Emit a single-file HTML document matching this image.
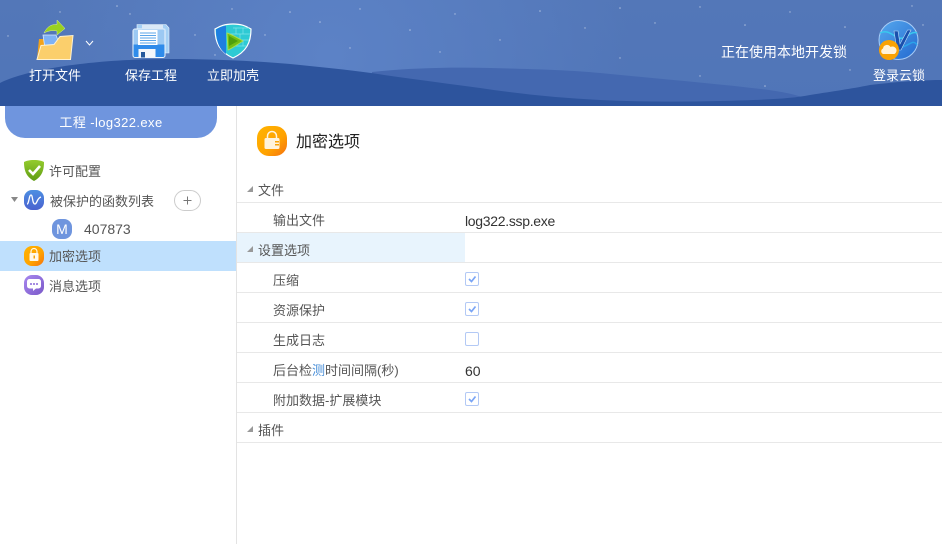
<!DOCTYPE html>
<html lang="zh"><head><meta charset="utf-8"><style>
html,body{margin:0;padding:0;background:#fff}
#p{position:relative;width:942px;height:544px;overflow:hidden;font-family:"Liberation Sans","Noto Sans CJK SC",sans-serif;font-size:13px;color:#555}
.t{position:absolute;white-space:nowrap;line-height:18px}
.w{color:#fff}
.l{position:absolute;left:237px;right:0;height:1px;background:#e8e8e8}
.c{position:absolute;left:465px;width:12px;height:12px;border:1px solid #b3c9f5;border-radius:2px;background:#fff}
.a{position:absolute;left:247px;width:0;height:0;border-left:6px solid transparent;border-bottom:6px solid #999}
svg{position:absolute;overflow:visible}
</style></head><body><div id="p">
<svg style="left:0;top:0" width="942" height="106" viewBox="0 0 942 106">
<defs><linearGradient id="bg" x1="0" y1="0" x2="0" y2="1"><stop offset="0" stop-color="#5377b8"/><stop offset="1" stop-color="#5075b8"/></linearGradient>
<radialGradient id="gl" gradientUnits="userSpaceOnUse" cx="330" cy="55" r="300"><stop offset="0" stop-color="#5c82c6" stop-opacity="1"/><stop offset="1" stop-color="#5c82c6" stop-opacity="0"/></radialGradient>
<linearGradient id="cb" x1="0" y1="0" x2="1" y2="1"><stop offset="0" stop-color="#56a8ee"/><stop offset="1" stop-color="#2369d0"/></linearGradient></defs>
<rect width="942" height="106" fill="url(#bg)"/><rect width="942" height="106" fill="url(#gl)"/>
<path d="M372 72C410 68 450 67 490 68C530 69 570 70 600 73C660 79 720 84 769 90C790 93 800 96 810 100V106H372Z" fill="#4468b0"/>
<path d="M0 83C30 68 100 59 168 59C215 59 260 61 300 65C330 68 360 71 384 75C420 80 450 84 480 88C520 94 560 98 600 100C640 102 680 102 720 101C760 100 790 99 810 95C835 91 850 89 870 85C895 82 920 80 942 80V106H0Z" fill="#2d549d"/>
<g fill="#fff" opacity=".5"><circle cx="117" cy="6" r=".8"/><circle cx="130" cy="14" r=".7"/><circle cx="232" cy="9" r=".7"/><circle cx="290" cy="12" r=".8"/><circle cx="195" cy="35" r=".7"/><circle cx="265" cy="35" r=".7"/><circle cx="8" cy="36" r=".7"/><circle cx="320" cy="22" r=".8"/><circle cx="360" cy="9" r=".7"/><circle cx="410" cy="30" r=".8"/><circle cx="455" cy="14" r=".7"/><circle cx="500" cy="40" r=".7"/><circle cx="540" cy="11" r=".8"/><circle cx="585" cy="28" r=".7"/><circle cx="620" cy="8" r=".8"/><circle cx="655" cy="23" r=".7"/><circle cx="700" cy="7" r=".7"/><circle cx="745" cy="25" r=".8"/><circle cx="790" cy="12" r=".7"/><circle cx="845" cy="27" r=".8"/><circle cx="912" cy="6" r=".7"/><circle cx="923" cy="25" r=".7"/><circle cx="700" cy="76" r=".7"/><circle cx="765" cy="86" r=".8"/><circle cx="850" cy="70" r=".7"/><circle cx="350" cy="48" r=".7"/><circle cx="620" cy="58" r=".7"/><circle cx="215" cy="55" r=".7"/><circle cx="60" cy="12" r=".7"/><circle cx="440" cy="52" r=".7"/></g>
<!-- folder -->
<path d="M37 59L39 39H46L50 36V59Z" fill="#f2a31b"/>
<path d="M43 35L56 35L60 46L46 55Z" fill="#7fb2f5" stroke="#dbe9fb" stroke-width=".8"/>
<path d="M37 59.500L41 45.500L54 44.500L60 36.500L73 35.500L70.500 59.500Z" fill="#fbcf6c" stroke="#fff2d0" stroke-width="1"/>
<path d="M44 33C47 27 51 24 57 24.500V20L65 28.500L57 35V31C52 30 48 31 44 33Z" fill="#9ad11f" stroke="#d8ee9c" stroke-width=".5"/>
<path d="M86 41L89.500 45L93 41" fill="none" stroke="#fff" stroke-width="1"/>
<!-- save -->
<path d="M137 24.500H166L169 28V53H165V29L137 29Z" fill="#a5d0f5" stroke="#e8f2fb" stroke-width=".6"/>
<rect x="133" y="29" width="32" height="28.500" rx="2" fill="#2f8bea" stroke="#eef5fc" stroke-width="1"/>
<rect x="133.500" y="29.500" width="31" height="15" fill="#9cc9f3"/>
<rect x="142" y="24.500" width="21" height="5" fill="#dbe9f7"/>
<rect x="138" y="30" width="19.500" height="15" fill="#fff"/>
<path d="M140 33H156M140 35.500H156M140 38H156M140 40.500H156M140 43H156" stroke="#5aa5ea" stroke-width=".9"/>
<rect x="138.500" y="49" width="17" height="8.500" fill="#f4f7fb"/>
<rect x="141" y="52" width="4" height="5.500" fill="#25599c"/>
<!-- shield -->
<path d="M233 24C223 24 219 27 215 29C215 43 220 52 233 58C246 52 251 43 251 29C247 27 243 24 233 24Z" fill="#2ecad4" stroke="#fff" stroke-width="1.200"/>
<path d="M226 25.500C222 26.500 219 27.500 216 29.500C216 42 220 50 226 54Z" fill="#1e7fe0"/>
<path d="M233 28H249M228 34H250M228 40H249M228 46H246M236 28V34M243 28V34M232 34V40M240 34V40M236 40V46M243 40V46" stroke="#7fe3ea" stroke-width=".7" fill="none"/>
<path d="M227 33C233 35 238 38 243 41C238 44 233 48 228 50Z" fill="#72bf12" stroke="#a6dc55" stroke-width="1" stroke-linejoin="round"/>
<path d="M229 36L238 41L229 46Z" fill="#4f9f0c"/>
<!-- cloud lock -->
<circle cx="898.500" cy="40" r="19.500" fill="url(#cb)" stroke="#a8cdf6" stroke-width="1"/>
<path d="M880 33C888 29 893 36 899 38C906 40 911 30 917 33" fill="none" stroke="#39c8ee" stroke-width="1.500"/>
<path d="M881 45C890 39 895 46 901 47C908 47 913 38 917 45" fill="none" stroke="#2ba3e8" stroke-width="1.500"/>
<path d="M894 31L897 50H901L911 30H907.500L900 44L898 31Z" fill="#1a50ad" stroke="#bcdcf9" stroke-width=".6"/>
<circle cx="889" cy="50" r="10" fill="#f9a204"/>
<path d="M883 54a3 3 0 0 1 0-5.500a4 4 0 0 1 7.500-1.500a3.500 3.500 0 0 1 4 7Z" fill="#fff2d8"/>
</svg>
<div class="t w" style="left:29px;top:67px">打开文件</div>
<div class="t w" style="left:125px;top:67px">保存工程</div>
<div class="t w" style="left:207px;top:67px">立即加壳</div>
<div class="t w" style="left:721px;top:43px;font-size:14px">正在使用本地开发锁</div>
<div class="t w" style="left:873px;top:67px">登录云锁</div>

<div style="position:absolute;left:5px;top:106px;width:212px;height:32px;background:#6f95de;border-radius:0 0 20px 20px"></div>
<div class="t w" style="left:5px;width:212px;text-align:center;top:114px;letter-spacing:.4px">工程 -log322.exe</div>
<div style="position:absolute;left:236px;top:106px;width:1px;height:438px;background:#e3e3e3"></div>
<div style="position:absolute;left:0;top:241px;width:236px;height:30px;background:#bfe0fd"></div>

<svg style="left:0;top:155px" width="236" height="145" viewBox="0 155 236 145">
<defs>
<linearGradient id="o" x1="0" y1="0" x2="1" y2="1"><stop offset="0" stop-color="#ffb400"/><stop offset=".6" stop-color="#ffa200"/><stop offset="1" stop-color="#f57010"/></linearGradient>
<linearGradient id="b" x1="0" y1="0" x2="0" y2="1"><stop offset="0" stop-color="#4d8fe2"/><stop offset="1" stop-color="#4a62cf"/></linearGradient>
<linearGradient id="v" x1="0" y1="0" x2="1" y2="1"><stop offset="0" stop-color="#a888ef"/><stop offset="1" stop-color="#7a58c8"/></linearGradient>
<linearGradient id="g" x1="0" y1="0" x2="0" y2="1"><stop offset="0" stop-color="#94cb2d"/><stop offset="1" stop-color="#5f9c14"/></linearGradient>
</defs>
<path d="M34 160C29 160 26 161 24 162C24 172 27 177 34 181C41 177 44 172 44 162C42 161 39 160 34 160Z" fill="url(#g)"/>
<path d="M29 170L33 174L40 166" fill="none" stroke="#fff" stroke-width="2.600"/>
<rect x="24" y="190" width="20" height="20" rx="8" fill="url(#b)"/>
<path d="M27 204C29 204 29 195 31 195C33 195 32 204 35 204C37 204 37 198 41 197" fill="none" stroke="#fff" stroke-width="1.300"/>
<path d="M11 197H18L14.500 202Z" fill="#888"/>
<rect x="52" y="219" width="20" height="20" rx="8" fill="#6f95de"/>
<rect x="24" y="246" width="20" height="20" rx="8" fill="url(#o)"/>
<rect x="29.500" y="253" width="9" height="8" rx="1" fill="#fff8e8"/>
<path d="M31 253V251.500a3 3 0 0 1 6 0V253" fill="none" stroke="#fff8e8" stroke-width="1.200"/>
<rect x="33.500" y="255.500" width="1.500" height="3" fill="#f9a204"/>
<rect x="24" y="275" width="20" height="20" rx="8" fill="url(#v)"/>
<path d="M29.500 279H38.500a2.500 2.500 0 0 1 2.500 2.500V286a2.500 2.500 0 0 1-2.500 2.500H36L33 291V288.500H29.500A2.500 2.500 0 0 1 27 286V281.500A2.500 2.500 0 0 1 29.500 279Z" fill="#fff"/>
<circle cx="31" cy="284" r="1" fill="#8a68d8"/><circle cx="34" cy="284" r="1" fill="#8a68d8"/><circle cx="37" cy="284" r="1" fill="#8a68d8"/>
<rect x="174.500" y="190.500" width="26" height="20" rx="10" fill="#fff" stroke="#ccc"/>
<path d="M183.500 200.500H191.500M187.500 196.500V204.500" stroke="#777" stroke-width="1"/>
</svg>
<div class="t w" style="left:55px;top:220px;width:14px;text-align:center;font-size:14px">M</div>
<div class="t" style="left:49px;top:163px">许可配置</div>
<div class="t" style="left:50px;top:193px">被保护的函数列表</div>
<div class="t" style="left:84px;top:220px;font-size:14px">407873</div>
<div class="t" style="left:49px;top:248px">加密选项</div>
<div class="t" style="left:49px;top:278px">消息选项</div>

<svg style="left:257px;top:126px" width="31" height="31" viewBox="0 0 31 31">
<rect width="30" height="30" rx="12" fill="url(#o)"/>
<rect x="7.500" y="12" width="15" height="11" rx="1.500" fill="#fff3dc"/>
<path d="M10.500 12V10a4.500 4.500 0 0 1 9 0V12" fill="none" stroke="#fff3dc" stroke-width="1.500"/>
<rect x="18" y="15" width="4" height="1.500" fill="#f9a204"/><rect x="18" y="18" width="4" height="1.500" fill="#f9a204"/>
</svg>
<div class="t" style="left:296px;top:133px;font-size:16px;line-height:20px;color:#222">加密选项</div>

<div style="position:absolute;left:237px;top:233px;width:228px;height:29px;background:#e8f4fd"></div>
<div class="l" style="top:202px"></div><div class="l" style="top:232px"></div><div class="l" style="top:262px"></div><div class="l" style="top:292px"></div><div class="l" style="top:322px"></div><div class="l" style="top:352px"></div><div class="l" style="top:382px"></div><div class="l" style="top:412px"></div><div class="l" style="top:442px"></div>
<div class="a" style="top:186px"></div><div class="a" style="top:246px"></div><div class="a" style="top:426px"></div>
<div class="t" style="left:258px;top:182px">文件</div>
<div class="t" style="left:273px;top:212px">输出文件</div>
<div class="t" style="left:465px;top:212px;color:#333;font-size:14px;letter-spacing:-.3px">log322.ssp.exe</div>
<div class="t" style="left:258px;top:242px">设置选项</div>
<div class="t" style="left:273px;top:272px">压缩</div>
<div class="t" style="left:273px;top:302px">资源保护</div>
<div class="t" style="left:273px;top:332px">生成日志</div>
<div class="t" style="left:273px;top:362px">后台检<span style="color:#4a8fd8">测</span>时间间隔(秒)</div>
<div class="t" style="left:465px;top:362px;color:#333;font-size:14px">60</div>
<div class="t" style="left:273px;top:392px">附加数据-扩展模块</div>
<div class="t" style="left:258px;top:422px">插件</div>
<div class="c" style="top:272px"></div><div class="c" style="top:302px"></div><div class="c" style="top:332px"></div><div class="c" style="top:392px"></div>
<svg style="left:465px;top:272px" width="14" height="140" viewBox="0 0 14 140"><path d="M4 7L6.500 9.500L10.500 4.500M4 37L6.500 39.500L10.500 34.500M4 127L6.500 129.500L10.500 124.500" fill="none" stroke="#7aa5f5" stroke-width="1.700"/></svg>
</div></body></html>
